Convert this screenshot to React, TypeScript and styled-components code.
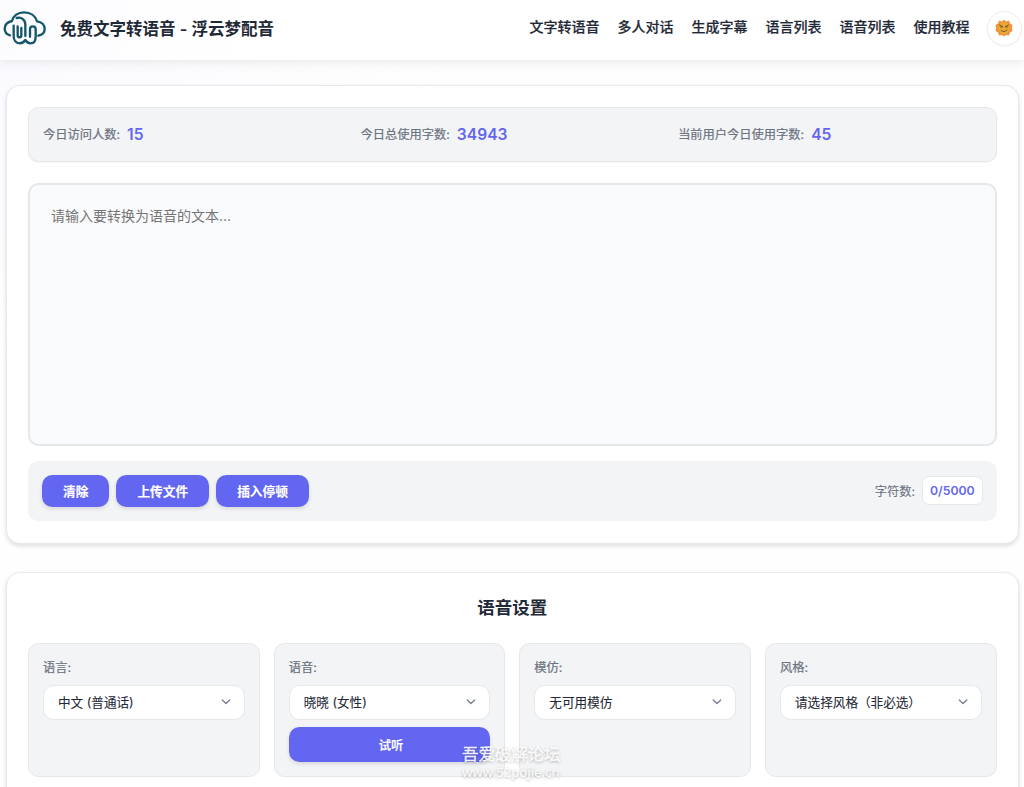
import React from 'react';
import styled, { createGlobalStyle, css } from 'styled-components';

const GlobalStyle = createGlobalStyle`
  * { box-sizing: border-box; }
  html, body { margin: 0; }
  body {
    font-family: Inter, "Noto Sans CJK SC", sans-serif;
    color: #1f2937;
    background: radial-gradient(circle at 0 0, #fafaff 0, #fdfdfe 300px, #fefefe 460px);
  }
  button, select, textarea { font-family: inherit; }
`;

const Page = styled.div`
  height: 787px;
  overflow: hidden;
`;

const Header = styled.header`
  height: 60px;
  display: flex;
  align-items: center;
  padding: 0 2px 4px 0;
  box-shadow: 0 3px 10px rgba(0, 0, 0, 0.08);
  background: linear-gradient(100deg, #fcfcff 0, #fff 260px);
`;

const Logo = styled.svg`
  width: 50px;
  height: 47px;
  flex: none;
  align-self: flex-start;
`;

const SiteTitle = styled.h1`
  margin: 1px auto 0 10px;
  font-size: 16.5px;
  line-height: 24px;
  font-weight: 600;
  white-space: nowrap;
`;

const Nav = styled.nav`
  display: flex;
  gap: 18px;
  margin: 0 17.5px 2px 0;
`;

const NavLink = styled.a`
  font-size: 14px;
  line-height: 20px;
  font-weight: 500;
  -webkit-text-stroke: 0.2px currentColor;
  white-space: nowrap;
`;

const ThemeButton = styled.button`
  width: 35px;
  height: 35px;
  padding: 0 1px 0 0;
  border: 1px solid #ebebed;
  border-radius: 50%;
  background: #fff;
  display: grid;
  place-items: center;
  box-shadow: 0 1px 2px rgba(0, 0, 0, 0.03);
`;

const Main = styled.main`
  padding: 25px 5.3px 0 6px;
  display: flex;
  flex-direction: column;
  gap: 28px;
`;

const Panel = styled.section<{ $height: number }>`
  height: ${(p) => p.$height}px;
  padding: 21px;
  border: 1px solid #e8e9ef;
  border-radius: 14px;
  background: #fff;
  box-shadow: 0 2px 4px rgba(0, 0, 0, 0.13);
`;

const surface = css`
  background: #f3f4f6;
  border: 1px solid #e5e7eb;
  border-radius: 10.5px;
`;

const Stats = styled.div`
  ${surface}
  height: 55px;
  padding: 0 14px;
  display: grid;
  grid-template-columns: repeat(3, 1fr);
  column-gap: 14px;
  align-items: center;
  box-shadow: 0 1px 2px rgba(0, 0, 0, 0.04);
`;

const Stat = styled.div`
  display: flex;
  align-items: center;
  gap: 7px;
  line-height: 24px;
`;

const Label = styled.span<{ $stroke?: number }>`
  font-size: 12.25px;
  font-weight: 400;
  -webkit-text-stroke: ${(p) => p.$stroke ?? 0.2}px currentColor;
  color: #6b7280;
  white-space: nowrap;
`;

const StatValue = styled.strong`
  font-size: 15.6px;
  font-weight: 600;
  color: #6366f1;
`;

const TextInput = styled.textarea`
  display: block;
  width: 100%;
  height: 263px;
  margin-top: 21px;
  padding: 20px 21px;
  border: 2px solid #e5e7eb;
  border-radius: 10.5px;
  background: #f9fafb;
  font-size: 14px;
  line-height: 22.4px;
  resize: none;
  &::placeholder { color: #757575; }
`;

const Toolbar = styled.div`
  height: 60px;
  margin-top: 15px;
  padding: 0 14px;
  display: flex;
  align-items: center;
  gap: 7px;
  border-radius: 10.5px;
  background: #f3f4f6;
`;

const Button = styled.button<{ $wide?: boolean }>`
  height: ${(p) => (p.$wide ? 35 : 32)}px;
  width: ${(p) => (p.$wide ? '100%' : 'auto')};
  padding: ${(p) => (p.$wide ? '0 18px 0 21px' : '0 21px 2px')};
  border: 0;
  border-radius: 10.5px;
  background: #6366f1;
  color: #fff;
  font-size: ${(p) => (p.$wide ? 12.25 : 12.7)}px;
  font-weight: ${(p) => (p.$wide ? 500 : 600)};
  -webkit-text-stroke: ${(p) => (p.$wide ? 0.2 : 0.15)}px currentColor;
  box-shadow: 0 2px 4px rgba(0, 0, 0, 0.12);
`;

const Counter = styled.div`
  margin-left: auto;
  margin-bottom: 1px;
  display: flex;
  align-items: center;
  gap: 7px;
`;

const CountBox = styled.span`
  height: 29px;
  padding: 0 7px;
  border: 1px solid #e5e7eb;
  border-radius: 7px;
  background: #fff;
  color: #6366f1;
  font-size: 12.25px;
  line-height: 27px;
  font-weight: 600;
`;

const PanelTitle = styled.h2`
  margin: 0 0 21px;
  font-size: 17.5px;
  line-height: 28px;
  font-weight: 600;
  text-align: center;
`;

const SettingGrid = styled.div`
  display: grid;
  grid-template-columns: repeat(4, 1fr);
  gap: 14px;
`;

const Setting = styled.div`
  ${surface}
  height: 134px;
  padding: 14px;
  display: flex;
  flex-direction: column;
  gap: 7px;
`;

const SettingLabel = styled(Label)`
  line-height: 20px;
`;

const SelectBox = styled.div`
  height: 35px;
  padding: 0 13px 2px 14px;
  display: flex;
  align-items: center;
  justify-content: space-between;
  border: 1px solid #e5e7eb;
  border-radius: 10.5px;
  background: #fff;
  font-size: 12.6px;
  -webkit-text-stroke: 0.1px currentColor;
  white-space: nowrap;
`;

const Watermark = styled.div`
  position: absolute;
  left: 462px;
  top: 743px;
  display: flex;
  flex-direction: column;
  color: rgba(255, 255, 255, 0.9);
  text-shadow: 0 1px 3px rgba(0, 0, 0, 0.35);
  white-space: nowrap;
  pointer-events: none;
`;

const WatermarkName = styled.span`
  font: 16.4px/21px "Noto Sans CJK SC", sans-serif;
  -webkit-text-stroke: 0.4px currentColor;
`;

const WatermarkUrl = styled.span`
  font: 13.2px/16px "Noto Sans", sans-serif;
  -webkit-text-stroke: 0.2px currentColor;
`;

const CloudLogo = () => (
  <Logo viewBox="0 0 150 141" fill="none" stroke="#14566a" strokeWidth="7" strokeLinecap="round" strokeLinejoin="round">
    <path d="M30 106C21 103 14 96 14 86c0-12 9-20 22-23C40 47 54 37 72 37c20 0 35 11 39 27 14 2 23 11 23 23 0 11-8 18-19 20" />
    <path d="M50 54c15-4 26 6 26 20v34" />
    <path d="M41 77v31c0 13 7 22 18 22 8 0 13-4 17-10 4 6 8 10 15 10 10 0 16-8 16-20V88c0-12-17-12-17 0v22" />
    <path d="M53 79v27c0 8 11 8 11 0V84" />
  </Logo>
);

const SunIcon = () => (
  <svg width="18" height="18" viewBox="0 0 36 36">
    <path fill="#ee9440" d="m18 1 4 4 6-2 2 6 5 3-1 6 1 6-5 3-2 6-6-1-4 3-4-3-6 1-2-6-5-3 1-6-1-6 5-3 2-6 6 2z" />
    <circle cx="18" cy="18" r="12" fill="#e9a832" />
    <path d="m9 12 6 3m12-3-6 3M11 16h4m6 0h4M12 23q6 5 12-1" fill="none" stroke="#76572f" strokeWidth="2" strokeLinecap="round" />
  </svg>
);

const Chevron = () => (
  <svg width="10" height="7" viewBox="0 0 10 7" fill="none" stroke="#7b8492" strokeWidth="1.4" strokeLinecap="round" strokeLinejoin="round">
    <path d="m1.3 1.9 3.7 3.7 3.7-3.7" />
  </svg>
);

const links = ['文字转语音', '多人对话', '生成字幕', '语言列表', '语音列表', '使用教程'];
const stats = [
  ['今日访问人数:', '15'],
  ['今日总使用字数:', '34943'],
  ['当前用户今日使用字数:', '45'],
];
const settings = [
  { label: '语言:', value: '中文 (普通话)' },
  { label: '语音:', value: '晓晓 (女性)', action: '试听' },
  { label: '模仿:', value: '无可用模仿' },
  { label: '风格:', value: '请选择风格（非必选）' },
];

export default function App() {
  return (
    <Page>
      <GlobalStyle />
      <Header>
        <CloudLogo />
        <SiteTitle>免费文字转语音 - 浮云梦配音</SiteTitle>
        <Nav>{links.map((l) => <NavLink key={l}>{l}</NavLink>)}</Nav>
        <ThemeButton><SunIcon /></ThemeButton>
      </Header>
      <Main>
        <Panel $height={459}>
          <Stats>
            {stats.map(([label, value]) => (
              <Stat key={label}><Label>{label}</Label><StatValue>{value}</StatValue></Stat>
            ))}
          </Stats>
          <TextInput placeholder="请输入要转换为语音的文本..." />
          <Toolbar>
            <Button>清除</Button>
            <Button>上传文件</Button>
            <Button>插入停顿</Button>
            <Counter><Label $stroke={0.1}>字符数:</Label><CountBox>0/5000</CountBox></Counter>
          </Toolbar>
        </Panel>
        <Panel $height={260}>
          <PanelTitle>语音设置</PanelTitle>
          <SettingGrid>
            {settings.map((s) => (
              <Setting key={s.label}>
                <SettingLabel>{s.label}</SettingLabel>
                <SelectBox>{s.value}<Chevron /></SelectBox>
                {s.action && <Button $wide>{s.action}</Button>}
              </Setting>
            ))}
          </SettingGrid>
        </Panel>
      </Main>
      <Watermark>
        <WatermarkName>吾爱破解论坛</WatermarkName>
        <WatermarkUrl>www.52pojie.cn</WatermarkUrl>
      </Watermark>
    </Page>
  );
}
